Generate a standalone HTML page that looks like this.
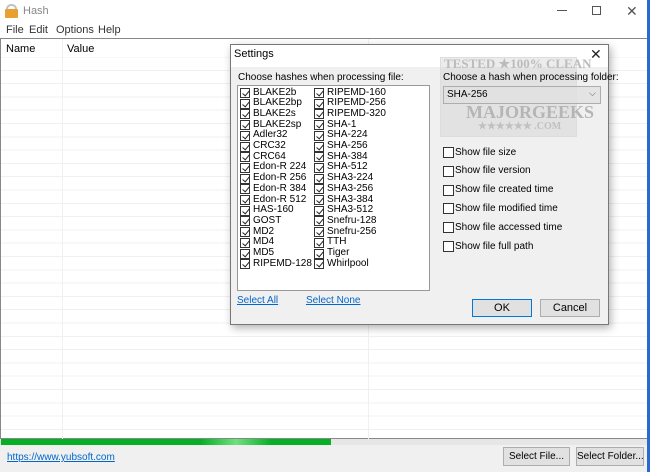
<!DOCTYPE html>
<html><head><style>
*{margin:0;padding:0;box-sizing:border-box}
body{width:650px;height:472px;position:relative;overflow:hidden;background:#fff;font-family:"Liberation Sans",sans-serif;font-size:11px;color:#000}
.a{position:absolute;white-space:nowrap}
.cb{position:absolute;width:10px;height:10px;border:1px solid #333;background:#fff}
.cb.c::after{content:"";position:absolute;left:2.5px;top:0px;width:3px;height:6px;border:solid #222;border-width:0 1.2px 1.2px 0;transform:rotate(40deg)}
.btn{position:absolute;background:#e1e1e1;border:1px solid #adadad;text-align:center;line-height:17px;font-size:11px;white-space:nowrap}
.lnk{color:#0066cc;text-decoration:underline}
</style></head><body>
<div class="a" style="left:6px;top:4px;width:11px;height:9px;border:2px solid #c0c0c0;border-bottom:none;border-radius:5px 5px 0 0"></div>
<div class="a" style="left:5px;top:9px;width:13px;height:9px;background:#e8a030;border-radius:1px"></div>
<div class="a" style="left:23px;top:5px;color:#888;font-size:11px">Hash</div>
<div class="a" style="left:557px;top:10px;width:10px;height:1px;background:#555"></div>
<div class="a" style="left:592px;top:6px;width:9px;height:9px;border:1px solid #555"></div>
<div class="a" style="left:626px;top:3px;color:#555;font-size:14px">✕</div>
<div class="a" style="left:647px;top:0;width:3px;height:472px;background:#2a6ad0"></div>
<div class="a" style="left:6px;top:24px;color:#333">File</div>
<div class="a" style="left:29px;top:24px;color:#333">Edit</div>
<div class="a" style="left:56px;top:24px;color:#333">Options</div>
<div class="a" style="left:98px;top:24px;color:#333">Help</div>
<div class="a" style="left:0;top:38px;width:647px;height:401px;border:1px solid #888;border-right:none;background:repeating-linear-gradient(to bottom,#fff 0,#fff 12.3px,#f0f0f0 12.3px,#f0f0f0 13.3px);background-position:0 18.5px"></div>
<div class="a" style="left:1px;top:39px;width:646px;height:18px;background:#fff"></div>
<div class="a" style="left:62px;top:39px;width:1px;height:400px;background:#f0f0f0"></div>
<div class="a" style="left:368px;top:39px;width:1px;height:400px;background:#f0f0f0"></div>
<div class="a" style="left:6px;top:43px">Name</div>
<div class="a" style="left:67px;top:43px">Value</div>
<div class="a" style="left:0;top:439px;width:647px;height:6px;background:#e6e6e6"></div>
<div class="a" style="left:1px;top:439px;width:330px;height:6px;background:linear-gradient(to right,#06b025 0,#06b025 200px,#6fe07f 235px,#06b025 270px)"></div>
<div class="a" style="left:0;top:445px;width:647px;height:27px;background:#f0f0f0"></div>
<div class="a lnk" style="left:7px;top:452px;font-size:10px">https://www.yubsoft.com</div>
<div class="btn" style="left:503px;top:447px;width:67px;height:19px;font-size:10px">Select File...</div>
<div class="btn" style="left:576px;top:447px;width:68px;height:19px;font-size:10px">Select Folder...</div>
<div class="a" style="left:230px;top:44px;width:379px;height:281px;background:#f0f0f0;border:1px solid #777;box-shadow:2px 3px 8px rgba(0,0,0,.3)"></div>
<div class="a" style="left:231px;top:45px;width:377px;height:22px;background:#fff"></div>
<div class="a" style="left:234px;top:48px;font-size:11px">Settings</div>
<div class="a" style="left:590px;top:46px;font-size:14px;color:#222">✕</div>
<div class="a" style="left:238px;top:72px;font-size:10px">Choose hashes when processing file:</div>
<div class="a" style="left:237px;top:85px;width:193px;height:206px;background:#fff;border:1px solid #999"></div>
<div id="l1"></div>
<div class="a lnk" style="left:237px;top:295px;font-size:10px">Select All</div>
<div class="a lnk" style="left:306px;top:295px;font-size:10px">Select None</div>
<div class="a" style="left:440px;top:57px;width:137px;height:80px;background:rgba(200,200,200,.35);border:1px solid #ddd"></div>
<div class="a" style="left:444px;top:56px;font-family:'Liberation Serif',serif;font-weight:bold;font-size:13px;color:#bbb">TESTED ★100% CLEAN</div>
<div class="a" style="left:466px;top:102px;font-family:'Liberation Serif',serif;font-weight:bold;font-size:18px;color:#b5b5b5">MAJORGEEKS</div>
<div class="a" style="left:478px;top:121px;font-family:'Liberation Serif',serif;font-weight:bold;font-size:10px;color:#c0c0c0">★★★★★★ .COM</div>
<div class="a" style="left:443px;top:72px;font-size:10px">Choose a hash when processing folder:</div>
<div class="a" style="left:443px;top:86px;width:158px;height:18px;border:1px solid #adadad;background:rgba(225,225,225,.8)"></div>
<div class="a" style="left:447px;top:89px;font-size:10px">SHA-256</div>
<div class="a" style="left:589px;top:88px;font-size:9px;color:#555">⌵</div>
<div id="r"></div>
<div class="btn" style="left:472px;top:299px;width:60px;height:18px;border:1px solid #0078d7">OK</div>
<div class="btn" style="left:540px;top:299px;width:60px;height:18px">Cancel</div>
<script>
var c1=["BLAKE2b","BLAKE2bp","BLAKE2s","BLAKE2sp","Adler32","CRC32","CRC64","Edon-R 224","Edon-R 256","Edon-R 384","Edon-R 512","HAS-160","GOST","MD2","MD4","MD5","RIPEMD-128"];
var c2=["RIPEMD-160","RIPEMD-256","RIPEMD-320","SHA-1","SHA-224","SHA-256","SHA-384","SHA-512","SHA3-224","SHA3-256","SHA3-384","SHA3-512","Snefru-128","Snefru-256","TTH","Tiger","Whirlpool"];
var h="";
function col(a,x){a.forEach(function(t,i){var y=88+i*10.7;h+='<div class="cb c" style="left:'+x+'px;top:'+y+'px"></div><div class="a" style="left:'+(x+13)+'px;top:'+(y-1.5)+'px;font-size:10px">'+t+'</div>';});}
col(c1,240);col(c2,314);
var r=["Show file size","Show file version","Show file created time","Show file modified time","Show file accessed time","Show file full path"];
r.forEach(function(t,i){var y=147+i*18.8;h+='<div class="cb" style="left:443px;top:'+y+'px;width:11px;height:11px"></div><div class="a" style="left:455px;top:'+(y-0.5)+'px;font-size:10px">'+t+'</div>';});
document.getElementById("l1").outerHTML=h;
</script>
</body></html>
